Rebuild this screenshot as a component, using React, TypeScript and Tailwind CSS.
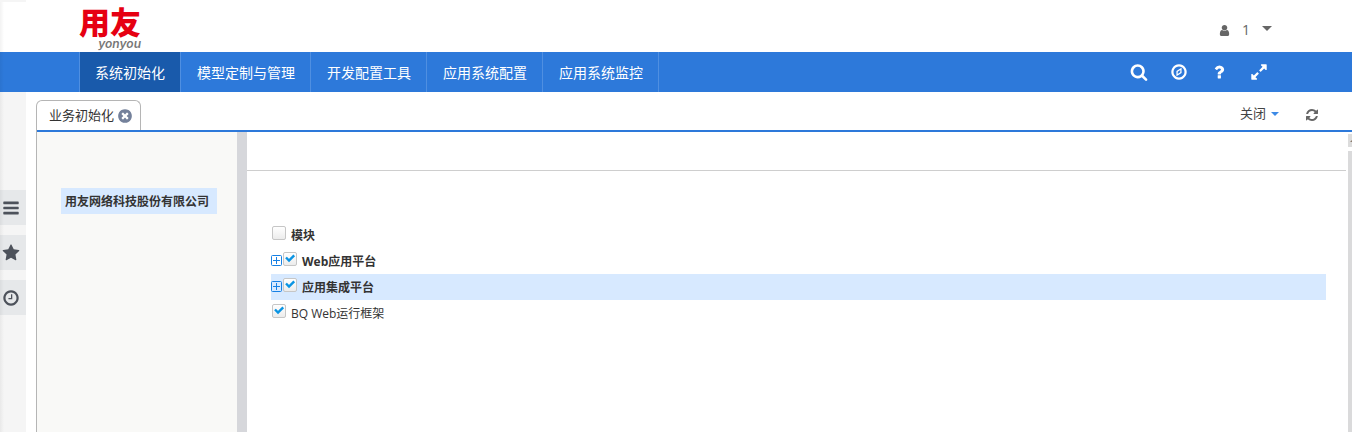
import { useState } from "react";
import type { ReactNode } from "react";

const ring =
  "M1440 896q0-148-73-273t-198-198-273-73-273 73-198 198-73 273 73 273 198 198 273 73 273-73 198-198 73-273zm224 0q0 209-103 385.5t-279.5 279.5-385.5 103-385.5-103-279.5-279.5-103-385.5 103-385.5 279.5-279.5 385.5-103 385.5 103 279.5 279.5 103 385.5z";

const icons = {
  user: "M1536 1399q0 109-62.5 187t-150.5 78h-854q-88 0-150.5-78t-62.5-187q0-85 8.5-160.5t31.5-152 58.5-131 94-89 134.5-34.5q131 128 313 128t313-128q76 0 134.5 34.5t94 89 58.5 131 31.5 152 8.5 160.5zm-256-887q0 159-112.5 271.5t-271.5 112.5-271.5-112.5-112.5-271.5 112.5-271.5 271.5-112.5 271.5 112.5 112.5 271.5z",
  search:
    "M1216 832q0-185-131.5-316.5t-316.5-131.5-316.5 131.5-131.5 316.5 131.5 316.5 316.5 131.5 316.5-131.5 131.5-316.5zm512 832q0 52-38 90t-90 38q-54 0-90-38l-343-342q-179 124-399 124-143 0-273.5-55.5t-225-150-150-225-55.5-273.5 55.5-273.5 150-225 225-150 273.5-55.5 273.5 55.5 225 150 150 225 55.5 273.5q0 220-124 399l343 343q37 37 37 90z",
  compass: "M1152 480v520l-512 312v-520zM1024 700l-256 160v232l256-160z" + ring,
  question:
    "M1088 1256v240q0 16-12 28t-28 12h-240q-16 0-28-12t-12-28v-240q0-16 12-28t28-12h240q16 0 28 12t12 28zm316-600q0 54-15.5 101t-35 76.5-55 59.5-57.5 43.5-61 35.5q-41 23-68.5 65t-27.5 67q0 17-12 32.5t-28 15.5h-240q-15 0-25.5-18.5t-10.5-37.5v-45q0-83 65-156.5t143-108.5q59-27 84-56t25-76q0-42-46.5-74t-107.5-32q-65 0-108 29-35 25-107 115-13 16-31 16-12 0-25-8l-164-125q-13-10-15.5-25t5.5-28q160-266 464-266 80 0 161 31t146 83 106 127.5 41 158.5z",
  expand:
    "M883 1056q0 13-10 23l-332 332 144 144q19 19 19 45t-19 45-45 19h-448q-26 0-45-19t-19-45v-448q0-26 19-45t45-19 45 19l144 144 332-332q10-10 23-10t23 10l114 114q10 10 10 23zm781-864v448q0 26-19 45t-45 19-45-19l-144-144-332 332q-10 10-23 10t-23-10l-114-114q-10-10-10-23t10-23l332-332-144-144q-19-19-19-45t19-45 45-19h448q26 0 45 19t19 45z",
  refresh:
    "M1639 1056q0 5-1 7-64 268-268 434.5t-478 166.5q-146 0-282.5-55t-243.5-157l-129 129q-19 19-45 19t-45-19-19-45v-448q0-26 19-45t45-19h448q26 0 45 19t19 45-19 45l-137 137q71 66 161 102t187 36q134 0 250-65t186-179q11-17 53-117 8-23 30-23h192q13 0 22.5 9.5t9.5 22.5zm25-800v448q0 26-19 45t-45 19h-448q-26 0-45-19t-19-45 19-45l138-138q-148-137-349-137-134 0-250 65t-186 179q-11 17-53 117-8 23-30 23h-199q-13 0-22.5-9.5t-9.5-22.5v-7q65-268 270-434.5t480-166.5q146 0 284 55.5t245 156.5l130-129q19-19 45-19t45 19 19 45z",
  close:
    "M1277 1122q0-26-19-45l-181-181 181-181q19-19 19-45 0-27-19-46l-90-90q-19-19-46-19-26 0-45 19l-181 181-181-181q-19-19-45-19-27 0-46 19l-90 90q-19 19-19 46 0 26 19 45l181 181-181 181q-19 19-19 45 0 27 19 46l90 90q19 19 46 19 26 0 45-19l181-181 181 181q19 19 45 19 27 0 46-19l90-90q19-19 19-46zm387-226q0 209-103 385.5t-279.5 279.5-385.5 103-385.5-103-279.5-279.5-103-385.5 103-385.5 279.5-279.5 385.5-103 385.5 103 279.5 279.5 103 385.5z",
  bars: "M1664 1344v128q0 26-19 45t-45 19h-1408q-26 0-45-19t-19-45v-128q0-26 19-45t45-19h1408q26 0 45 19t19 45zm0-512v128q0 26-19 45t-45 19h-1408q-26 0-45-19t-19-45v-128q0-26 19-45t45-19h1408q26 0 45 19t19 45zm0-512v128q0 26-19 45t-45 19h-1408q-26 0-45-19t-19-45v-128q0-26 19-45t45-19h1408q26 0 45 19t19 45z",
  star: "M1728 647q0 22-26 48l-363 354 86 500q1 7 1 20 0 21-10.5 35.5t-30.5 14.5q-19 0-40-12l-449-236-449 236q-22 12-40 12-21 0-31.5-14.5t-10.5-35.5q0-6 2-20l86-500-364-354q-25-27-25-48 0-37 56-46l502-73 225-455q19-41 49-41t49 41l225 455 502 73q56 9 56 46z",
  clock:
    "M1024 544v448q0 14-9 23t-23 9h-320q-14 0-23-9t-9-23v-64q0-14 9-23t23-9h224v-352q0-14 9-23t23-9h64q14 0 23 9t9 23z" + ring,
};

type IconName = keyof typeof icons;

function Icon({ name, className }: { name: IconName; className: string }) {
  return (
    <svg viewBox="0 0 1792 1792" fill="currentColor" fillRule="evenodd" aria-hidden="true" className={`block shrink-0 ${className}`}>
      <path d={icons[name]} />
    </svg>
  );
}

function Caret({ className }: { className: string }) {
  return (
    <svg viewBox="0 0 10 5" fill="currentColor" aria-hidden="true" className={`block shrink-0 ${className}`}>
      <path d="M0 0h10L5 5z" />
    </svg>
  );
}

const menu = ["系统初始化", "模型定制与管理", "开发配置工具", "应用系统配置", "应用系统监控"];

const tools: { icon: IconName; label: string }[] = [
  { icon: "search", label: "搜索" },
  { icon: "compass", label: "导航" },
  { icon: "question", label: "帮助" },
  { icon: "expand", label: "全屏" },
];

const shortcuts: { icon: IconName; label: string }[] = [
  { icon: "bars", label: "菜单" },
  { icon: "star", label: "收藏" },
  { icon: "clock", label: "最近" },
];

function Check({ id, defaultChecked = false }: { id: string; defaultChecked?: boolean }) {
  return (
    <span className="grid h-3.5 w-3.5 shrink-0">
      <input
        id={id}
        type="checkbox"
        defaultChecked={defaultChecked}
        className="peer col-start-1 row-start-1 h-3.5 w-3.5 appearance-none rounded-[2px] border border-[#c6c6c6] bg-linear-to-b from-white to-[#ececec]"
      />
      <svg
        viewBox="0 0 14 14"
        fill="none"
        stroke="#0a94e3"
        strokeWidth="2.4"
        aria-hidden="true"
        className="pointer-events-none col-start-1 row-start-1 hidden h-3.5 w-3.5 peer-checked:block"
      >
        <path d="M3 5.5l3 3 5.2-5.2" />
      </svg>
    </span>
  );
}

function Row({
  id,
  children,
  checked,
  expandable,
  bold,
  selected,
}: {
  id: string;
  children: ReactNode;
  checked?: boolean;
  expandable?: boolean;
  bold?: boolean;
  selected?: boolean;
}) {
  return (
    <li className={`flex h-[26px] items-start ${selected ? "bg-[#d7e9ff]" : ""}`}>
      {expandable ? (
        <button type="button" aria-label="展开" className="mt-[7px] mr-px block">
          <svg viewBox="0 0 11 11" fill="none" stroke="#1680e4" aria-hidden="true" className="block h-[11px] w-[11px]">
            <rect x=".5" y=".5" width="10" height="10" rx="1" />
            <path d="M2 5.5h7M5.5 2v7" />
          </svg>
        </button>
      ) : null}
      <span className={expandable ? "mt-1" : "mt-1 ml-px"}>
        <Check id={id} defaultChecked={checked} />
      </span>
      <label htmlFor={id} className={`ml-[5px] leading-7 whitespace-nowrap text-[#333] ${bold ? "font-bold" : ""}`}>
        {children}
      </label>
    </li>
  );
}

export default function App() {
  const [active, setActive] = useState(0);

  return (
    <div className="relative flex min-h-screen flex-col bg-white font-['Open_Sans','Noto_Sans_CJK_SC',sans-serif] text-xs text-[#333]">
      <div className="pointer-events-none absolute inset-y-0 left-0 w-1 bg-linear-to-r from-black/5 to-transparent" />
      <div className="absolute top-0 left-0 h-0.5 w-[26px] bg-[#f5f5f5]" />
      <header className="flex h-[52px] items-start justify-between pr-20 pl-[79px]">
        <a href="#" className="flex flex-col items-end pt-2.5">
          <span className="font-['Liberation_Sans','Noto_Sans_CJK_SC',sans-serif] text-[31px] leading-7 font-black text-[#e60012]">
            用友
          </span>
          <span className="font-[Inter,sans-serif] text-xs leading-3 font-semibold text-[#777] italic">yonyou</span>
        </a>
        <button type="button" className="mt-5 flex h-5 items-center text-[#666]">
          <Icon name="user" className="h-[13px] w-[13px]" />
          <span className="ml-[11px] text-sm">1</span>
          <Caret className="mb-1 ml-3 h-[5px] w-[10px]" />
        </button>
      </header>

      <nav className="flex h-10 justify-between bg-[#2d79da] pr-[84px] pl-[79px] text-white">
        <ul className="flex text-sm">
          {menu.map((item, i) => (
            <li key={item} className="flex">
              <button
                type="button"
                onClick={() => setActive(i)}
                className={`border-r border-[#4f8fe1] pt-0.5 pr-[15px] whitespace-nowrap ${i === 0 ? "border-l pl-[15px]" : "pl-4"} ${
                  i === active ? "bg-[#195aab]" : ""
                }`}
              >
                {item}
              </button>
            </li>
          ))}
        </ul>
        <div className="flex items-center gap-[22px] pb-px">
          {tools.map((tool) => (
            <button key={tool.label} type="button" aria-label={tool.label}>
              <Icon name={tool.icon} className="h-[18px] w-[18px]" />
            </button>
          ))}
        </div>
      </nav>

      <div className="flex grow">
        <aside className="flex w-[26px] shrink-0 flex-col gap-2.5 bg-[#f5f5f5] pt-[98px]">
          {shortcuts.map((item) => (
            <button
              key={item.label}
              type="button"
              aria-label={item.label}
              className="flex h-[35px] items-center bg-[#e6e8ea] pt-px pl-0.5 text-[#4d525b]"
            >
              <Icon name={item.icon} className="h-[18px] w-[18px]" />
            </button>
          ))}
        </aside>

        <div className="ml-2.5 flex grow flex-col pt-2">
          <div className="flex items-stretch justify-between pr-[33px]">
            <div className="flex h-[30px] items-center rounded-t-md border border-b-0 border-[#b5b5b5] pt-px pr-[7px] pl-3">
              <span className="text-[13px]">业务初始化</span>
              <button type="button" aria-label="关闭页签" className="ml-[3px] text-[#74819b]">
                <Icon name="close" className="h-4 w-4" />
              </button>
            </div>
            <div className="flex items-center text-[#666]">
              <button type="button" className="flex items-center pb-0.5 text-[13px] text-[#444]">
                关闭
                <Caret className="ml-[5px] h-1 w-2 text-[#3d8ae6]" />
              </button>
              <button type="button" aria-label="刷新" className="ml-[26px]">
                <Icon name="refresh" className="h-3.5 w-3.5" />
              </button>
            </div>
          </div>

          <div className="flex grow border-l border-[#b5b5b5]">
            <div className="flex grow border-t-2 border-[#2d79da]">
              <section className="w-[210px] shrink-0 border-r-10 border-[#d6d7db] bg-[#f9f9f7] pt-14 pr-5 pl-6">
                <button type="button" className="block h-[26px] w-full bg-[#d7e9ff] pt-0.5 pl-1 text-left font-bold whitespace-nowrap">
                  用友网络科技股份有限公司
                </button>
              </section>
              <main className="mr-0.5 grow">
                <div className="h-[39px] border-b border-[#cecece]" />
                <ul className="pt-[51px] pr-5 pl-6">
                  <Row id="all" bold>
                    模块
                  </Row>
                  <Row id="web" checked expandable bold>
                    Web应用平台
                  </Row>
                  <Row id="integration" checked expandable bold selected>
                    应用集成平台
                  </Row>
                  <Row id="bq" checked>
                    BQ Web运行框架
                  </Row>
                </ul>
              </main>
              <div className="flex w-1 flex-col gap-1 pt-0.5" aria-hidden="true">
                <div className="flex h-[13px] items-center overflow-hidden bg-[#dcdcdc] pl-0.5 text-[#8a7a6a]">
                  <Caret className="h-[3px] w-1.5 rotate-180" />
                </div>
                <div className="grow bg-[#dadadb]" />
              </div>
            </div>
          </div>
        </div>
      </div>
    </div>
  );
}
